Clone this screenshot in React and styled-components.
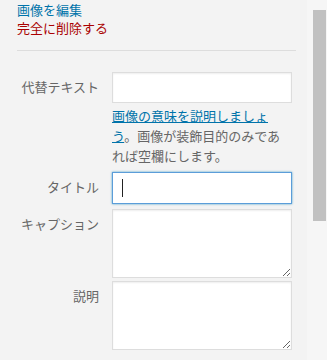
import React from 'react';
import styled, { createGlobalStyle } from 'styled-components';

const GlobalStyle = createGlobalStyle`
  html, body {
    margin: 0;
    padding: 0;
    background: #f3f3f3;
  }
  body {
    font-family: "Noto Sans CJK JP", "Noto Sans", sans-serif;
    font-size: 13px;
  }
`;

const Page = styled.div`
  display: flex;
  width: 327px;
  height: 360px;
  overflow: hidden;
`;

const Panel = styled.div`
  width: 307px;
  box-sizing: border-box;
  padding: 0 11px 0 17px;
  background: #f3f3f3;
`;

const ScrollTrack = styled.div`
  width: 20px;
  background: #f6f6f6;
  padding: 10px 1px 0 6px;
  box-sizing: border-box;
`;

const ScrollThumb = styled.div`
  width: 13px;
  height: 211px;
  background: #c1c1c1;
`;

const Actions = styled.div`
  display: flex;
  flex-direction: column;
  padding-top: 1px;
  line-height: 18px;
`;

const ActionLink = styled.a`
  color: ${p => (p.$danger ? '#a00' : '#0073aa')};
  text-decoration: none;
  font-size: 13px;
`;

const Divider = styled.div`
  height: 1px;
  background: #dddddd;
  margin-top: 13px;
`;

const Form = styled.div`
  display: grid;
  grid-template-columns: 82px 180px;
  column-gap: 13px;
  margin-top: 21px;
`;

const Label = styled.label`
  text-align: right;
  color: #666;
  font-size: 13px;
  line-height: 20px;
  padding-top: 5px;
  white-space: nowrap;
  margin-top: ${p => p.$top || 0}px;
`;

const Field = styled.div`
  position: relative;
  margin-top: ${p => p.$top || 0}px;
`;

const TextInput = styled.input`
  display: block;
  box-sizing: border-box;
  width: 180px;
  height: ${p => p.$h}px;
  margin: 0;
  padding: 3px 8px;
  border: 1px solid ${p => (p.$focus ? '#5b9dd9' : '#dddddd')};
  background: #fff;
  box-shadow: ${p =>
    p.$focus ? '0 0 2px rgba(30, 140, 190, 0.8)' : 'inset 0 1px 2px rgba(0, 0, 0, 0.07)'};
  outline: none;
  font: inherit;
`;

const TextArea = styled.textarea`
  display: block;
  box-sizing: border-box;
  width: 180px;
  height: 69px;
  margin: 0;
  padding: 3px 8px;
  border: 1px solid #dddddd;
  background: #fff;
  box-shadow: inset 0 1px 2px rgba(0, 0, 0, 0.07);
  outline: none;
  font: inherit;
`;

const Caret = styled.span`
  position: absolute;
  left: 10px;
  top: 7px;
  width: 1px;
  height: 18px;
  background: #222;
`;

const Help = styled.p`
  margin: 3px 0 0;
  color: #666;
  font-size: 13px;
  line-height: 20px;
`;

const HelpLink = styled.a`
  color: #0073aa;
  text-decoration: underline;
`;

export default function App() {
  return (
    <Page>
      <GlobalStyle />
      <Panel>
        <Actions>
          <ActionLink href="#">画像を編集</ActionLink>
          <ActionLink href="#" $danger>完全に削除する</ActionLink>
        </Actions>
        <Divider />
        <Form>
          <Label>代替テキスト</Label>
          <Field>
            <TextInput $h={31} />
            <Help>
              <HelpLink href="#">画像の意味を説明しましょう</HelpLink>。画像が装飾目的のみであれば空欄にします。
            </Help>
          </Field>

          <Label $top={6}>タイトル</Label>
          <Field $top={6}>
            <TextInput $h={32} $focus />
            <Caret />
          </Field>

          <Label $top={5}>キャプション</Label>
          <Field $top={5}>
            <TextArea />
          </Field>

          <Label $top={3}>説明</Label>
          <Field $top={3}>
            <TextArea />
          </Field>
        </Form>
      </Panel>
      <ScrollTrack>
        <ScrollThumb />
      </ScrollTrack>
    </Page>
  );
}
